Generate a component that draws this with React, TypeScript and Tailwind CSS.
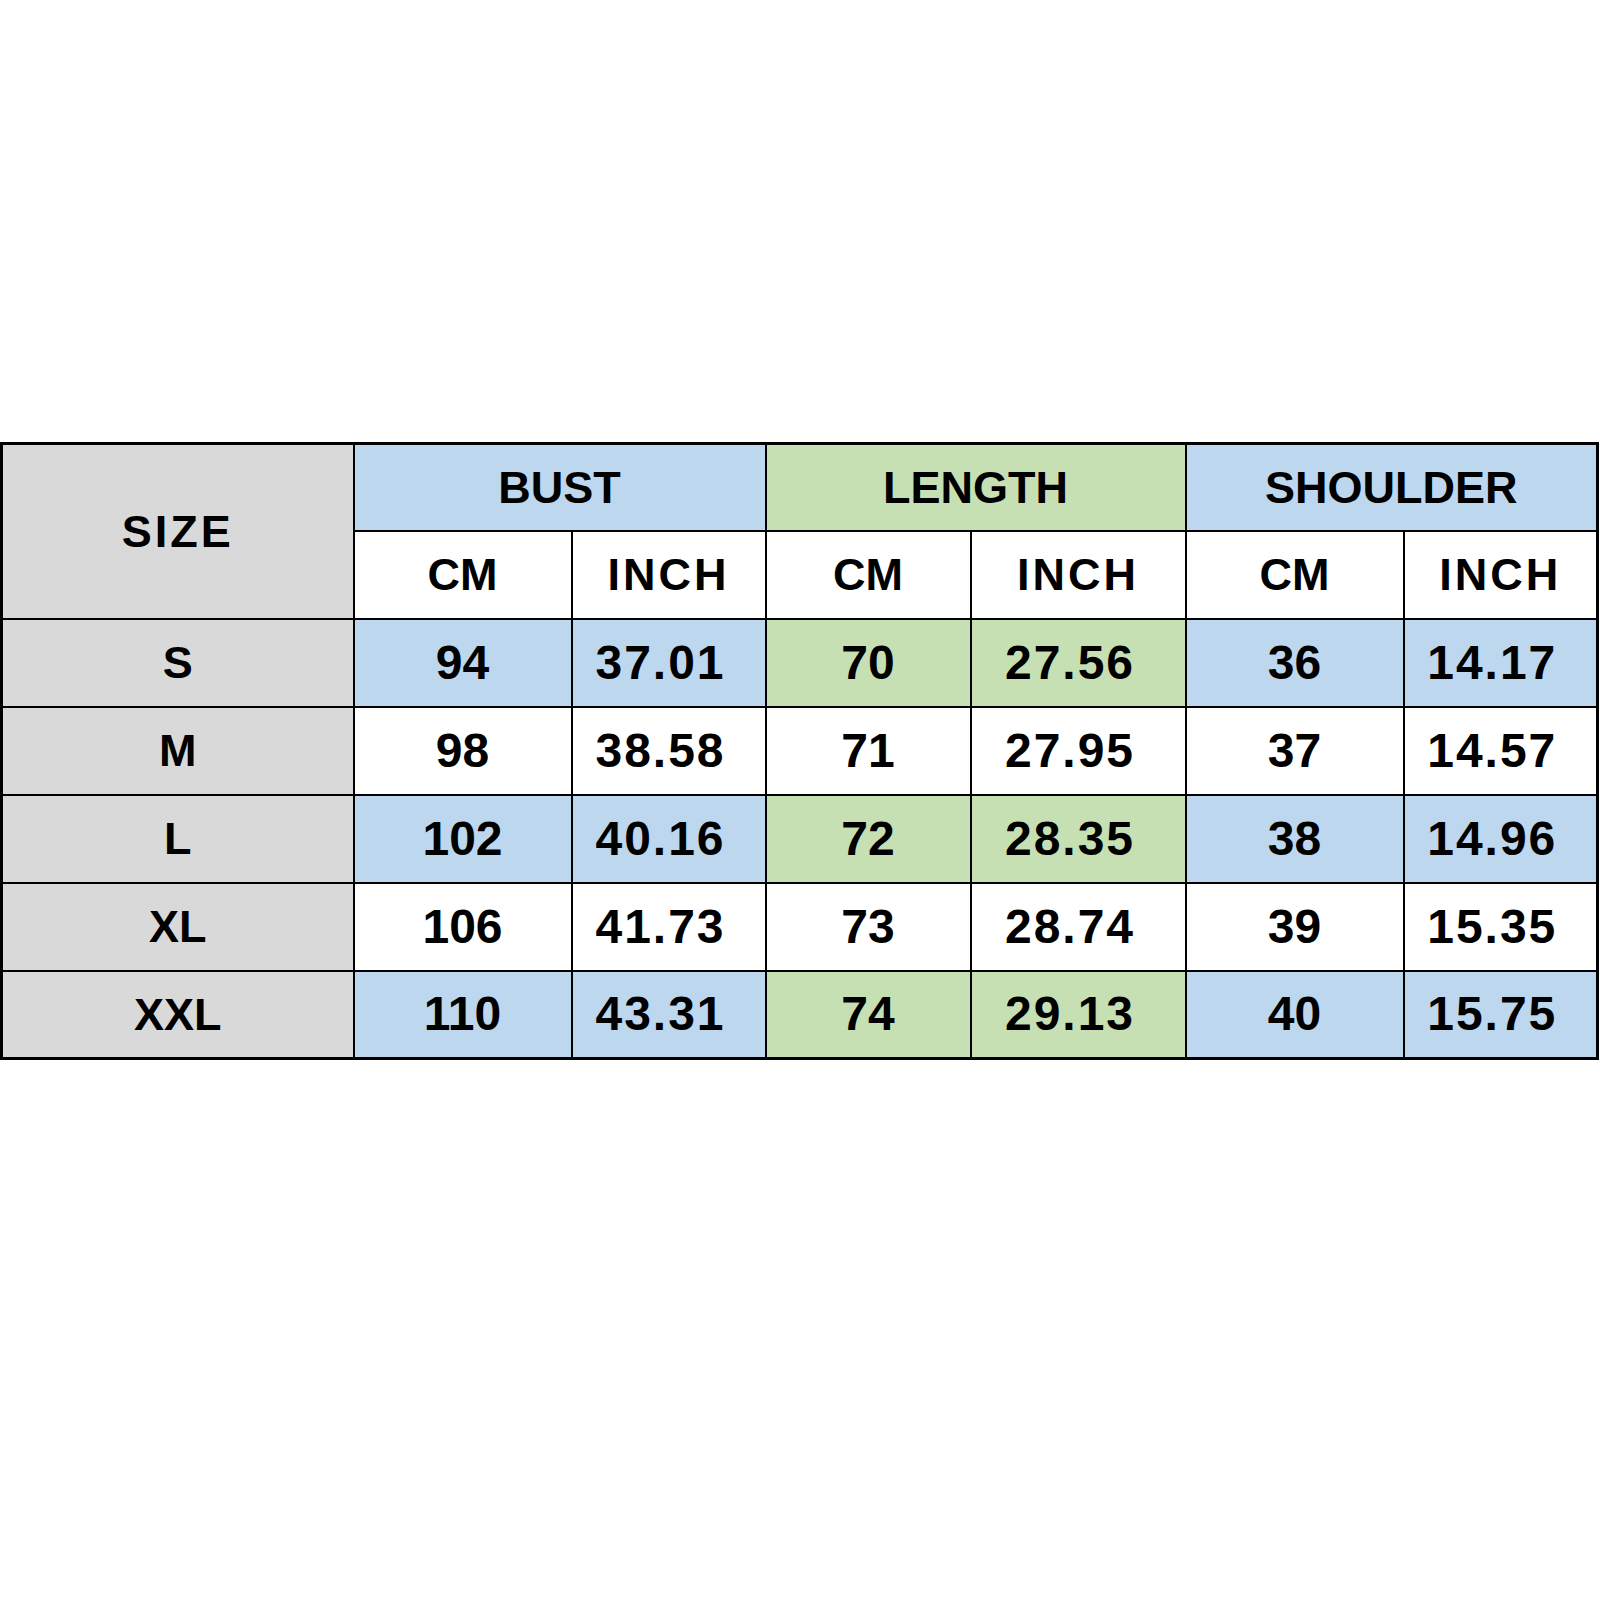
import React from 'react';

const BLUE = 'bg-[#bdd7ee]';
const GREEN = 'bg-[#c6e0b4]';
const GRAY = 'bg-[#d9d9d9]';

const rows = [
  { size: 'S', bust: ['94', '37.01'], length: ['70', '27.56'], shoulder: ['36', '14.17'] },
  { size: 'M', bust: ['98', '38.58'], length: ['71', '27.95'], shoulder: ['37', '14.57'] },
  { size: 'L', bust: ['102', '40.16'], length: ['72', '28.35'], shoulder: ['38', '14.96'] },
  { size: 'XL', bust: ['106', '41.73'], length: ['73', '28.74'], shoulder: ['39', '15.35'] },
  { size: 'XXL', bust: ['110', '43.31'], length: ['74', '29.13'], shoulder: ['40', '15.75'] },
];

const cell = 'border-2 border-black text-center align-middle p-0';
const inch = 'tracking-[2px] pr-[16px]';

const App: React.FC = () => {
  return (
    <div
      className="w-[1600px] h-[1600px] bg-white pt-[442px] text-black"
      style={{ fontFamily: '"Liberation Sans", Arial, sans-serif' }}
    >
      <table className="table-fixed border-collapse w-[1598px] border-[3px] border-black font-bold">
        <colgroup>
          <col className="w-[352px]" />
          <col className="w-[218px]" />
          <col className="w-[194px]" />
          <col className="w-[205px]" />
          <col className="w-[215px]" />
          <col className="w-[218px]" />
          <col className="w-[194px]" />
        </colgroup>
        <thead>
          <tr className="h-[87px] text-[45px]">
            <th rowSpan={2} className={`${cell} ${GRAY} font-bold tracking-[3px]`}>SIZE</th>
            <th colSpan={2} className={`${cell} ${BLUE} font-bold`}>BUST</th>
            <th colSpan={2} className={`${cell} ${GREEN} font-bold`}>LENGTH</th>
            <th colSpan={2} className={`${cell} ${BLUE} font-bold`}>SHOULDER</th>
          </tr>
          <tr className="h-[88px] text-[45px] bg-white">
            <th className={`${cell} font-bold`}>CM</th>
            <th className={`${cell} font-bold tracking-[3px]`}>INCH</th>
            <th className={`${cell} font-bold`}>CM</th>
            <th className={`${cell} font-bold tracking-[3px]`}>INCH</th>
            <th className={`${cell} font-bold`}>CM</th>
            <th className={`${cell} font-bold tracking-[3px]`}>INCH</th>
          </tr>
        </thead>
        <tbody>
          {rows.map((r, i) => {
            const shaded = i % 2 === 0;
            const b = shaded ? BLUE : 'bg-white';
            const g = shaded ? GREEN : 'bg-white';
            return (
              <tr key={r.size} className="h-[88px] text-[48px]">
                <td className={`${cell} ${GRAY} text-[45px]`}>{r.size}</td>
                <td className={`${cell} ${b}`}>{r.bust[0]}</td>
                <td className={`${cell} ${b} ${inch}`}>{r.bust[1]}</td>
                <td className={`${cell} ${g}`}>{r.length[0]}</td>
                <td className={`${cell} ${g} ${inch}`}>{r.length[1]}</td>
                <td className={`${cell} ${b}`}>{r.shoulder[0]}</td>
                <td className={`${cell} ${b} ${inch}`}>{r.shoulder[1]}</td>
              </tr>
            );
          })}
        </tbody>
      </table>
    </div>
  );
};

export default App;
